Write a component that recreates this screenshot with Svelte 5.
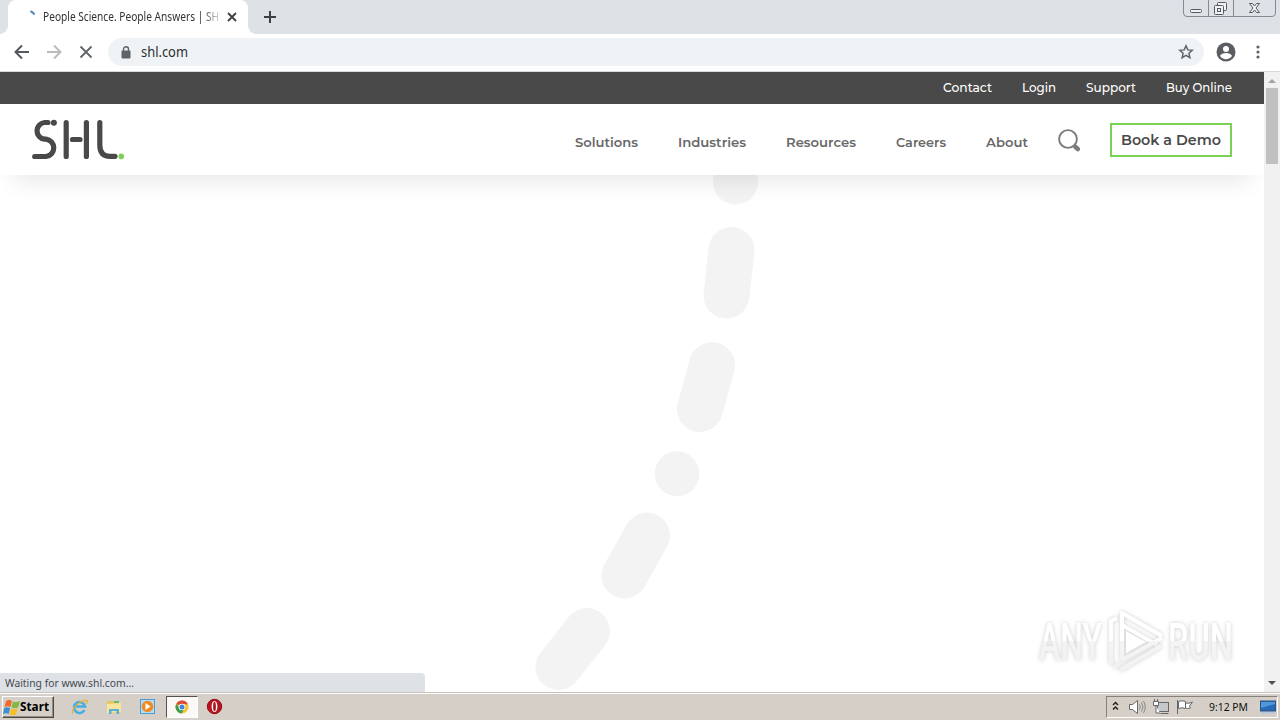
<script>
  const utility = [
    { label: 'Contact', width: 49 },
    { label: 'Login', width: 34 },
    { label: 'Support', width: 50 },
    { label: 'Buy Online', width: 66 }
  ];
  const menu = [
    { label: 'Solutions', width: 63 },
    { label: 'Industries', width: 68 },
    { label: 'Resources', width: 70 },
    { label: 'Careers', width: 50 },
    { label: 'About', width: 42 }
  ];
</script>

{#snippet fitted(label, width, size, weight)}
  <svg class="fitted" {width} height="20" aria-label={label}>
    <text x="0" y="15" font-size={size} font-weight={weight} textLength={width} lengthAdjust="spacingAndGlyphs">{label}</text>
  </svg>
{/snippet}

<div class="screen">
  <div class="tabstrip">
    <div class="tab">
      <svg class="spinner" width="16" height="16" viewBox="0 0 16 16"><path d="M6.500 2.200Q9 3 10.500 5.500" fill="none" stroke="#4a7fb5" stroke-width="2" /></svg>
      <div class="title">{@render fitted('People Science. People Answers | SH', 176, 12, 400)}</div>
      <svg class="close" width="10" height="10" viewBox="0 0 10 10"><path d="M1 1l8 8M9 1L1 9" stroke="#3c4043" stroke-width="1.800" /></svg>
    </div>
    <svg class="plus" width="12" height="12" viewBox="0 0 12 12"><path d="M6 0v12M0 6h12" stroke="#3c4043" stroke-width="2" /></svg>
    <svg class="window-buttons" width="94" height="18" viewBox="0 0 94 18">
      <path d="M.5 0V13Q.5 16.500 4 16.500H89Q92.500 16.500 92.500 13V0M25.500 0V16M50.500 0V16" fill="none" stroke="#858990" />
      <g fill="#f1f2f4" stroke="#555960">
        <rect x="7.500" y="9.500" width="11" height="3" rx="1" />
        <rect x="34.500" y="2.500" width="9" height="8" rx="1" />
        <rect x="31.500" y="5.500" width="9" height="9" rx="1" />
        <rect x="34.500" y="8.500" width="3" height="3" />
        <path d="M66.500 3.500h3l2 2.500 2-2.500h3l-3.500 4.500 3.500 4.500h-3l-2-2.500-2 2.500h-3l3.500-4.500z" />
      </g>
    </svg>
  </div>

  <div class="toolbar">
    <svg class="nav-icons" width="80" height="16" viewBox="0 0 80 16" fill="none" stroke-width="2">
      <path d="M15 8H2M8 1.500L1.500 8 8 14.500" stroke="#55585c" />
      <path d="M33 8h13M40 1.500L46.500 8 40 14.500" stroke="#babcbe" />
      <path d="M66.500 2.500l11 11M77.500 2.500l-11 11" stroke="#606367" stroke-width="1.800" />
    </svg>
    <div class="omnibox">
      <svg width="10" height="13" viewBox="0 0 10 13"><rect x="0.500" y="4.500" width="9" height="8" rx="1" fill="#5f6368" /><path d="M2.500 5V3.200a2.500 2.500 0 0 1 5 0V5" fill="none" stroke="#5f6368" stroke-width="1.400" /></svg>
      <div class="url">{@render fitted('shl.com', 47, 14, 400)}</div>
      <svg class="star" width="16" height="16" viewBox="0 0 16 16"><path d="M8 1.800l1.800 4.100 4.500.4-3.400 3 1 4.400L8 11.400l-3.900 2.300 1-4.400-3.400-3 4.500-.4z" fill="none" stroke="#5f6368" stroke-width="1.500" /></svg>
    </div>
    <svg class="avatar" width="20" height="20" viewBox="0 0 20 20"><circle cx="10" cy="10" r="9.500" fill="#5a5d62" /><circle cx="10" cy="7" r="3" fill="#fff" /><path d="M4 14c1.200-4 10.800-4 12 0a7.200 7.200 0 0 1-12 0z" fill="#fff" /></svg>
    <svg class="dots" width="4" height="14" viewBox="0 0 4 14" fill="#5f6368"><circle cx="2" cy="2" r="1.600" /><circle cx="2" cy="7" r="1.600" /><circle cx="2" cy="12" r="1.600" /></svg>
  </div>

  <div class="viewport">
    <main class="page">
      <svg class="trail" width="1264" height="620" viewBox="0 72 1264 620" fill="none" stroke="#f3f3f3" stroke-linecap="round" stroke-width="46">
        <path d="M735.500 181.500V182" stroke-width="45" />
        <path d="M731.500 250L726.500 295.500M712 365.300L700 409M647 535.500L624.500 575.500M587 631L558.500 667" />
        <path d="M677 473.500V474" stroke-width="44.500" />
      </svg>
      <header>
        <div class="utility">
          {#each utility as item}{@render fitted(item.label, item.width, 13, 500)}{/each}
        </div>
        <div class="main-nav">
          <svg class="logo" width="92" height="42" viewBox="0 0 92 42" fill="none" stroke="#4a4949" stroke-width="5.200" stroke-linecap="round">
            <path d="M16 4.500H12.500a8.400 8.400 0 0 0 0 16.700H14a8.700 8.700 0 0 1 0 17.300H2.700M34.200 4.500V38.500M54.400 4.500V38.500M40.500 21.500H48M67.800 4.500V27Q67.800 38.300 78 38.300H83" />
            <circle cx="21.900" cy="4.700" r="3" fill="#4a4949" stroke="none" />
            <circle cx="89.300" cy="38.400" r="2.800" fill="#79d255" stroke="none" />
          </svg>
          <nav>{#each menu as item}{@render fitted(item.label, item.width, 13, 600)}{/each}</nav>
          <svg class="search" width="24" height="24" viewBox="0 0 24 24"><circle cx="10" cy="10" r="8.900" fill="none" stroke="#7b7b7b" stroke-width="1.900" /><path d="M16.300 16.300l1.700 1.700" stroke="#7b7b7b" stroke-width="2" /><path d="M17.500 18l2.300 2" stroke="#7b7b7b" stroke-width="4.600" stroke-linecap="round" /></svg>
          <div class="demo">{@render fitted('Book a Demo', 100, 15, 600)}</div>
        </div>
      </header>
      <svg class="watermark" width="206" height="72" viewBox="0 0 206 72">
        <defs>
          <linearGradient id="sheen" gradientUnits="userSpaceOnUse" x1="0" y1="0" x2="0" y2="72">
            <stop offset=".47" stop-color="#fff" /><stop offset=".48" stop-color="#f4f4f4" /><stop offset="1" stop-color="#f1f1f1" />
          </linearGradient>
        </defs>
        <g fill="url(#sheen)" font-family="Roboto, sans-serif" font-size="51" font-weight="500">
          <text x="5" y="53" textLength="63" lengthAdjust="spacingAndGlyphs">ANY</text>
          <text x="134" y="53" textLength="65" lengthAdjust="spacingAndGlyphs">RUN</text>
        </g>
        <g fill="none" stroke="url(#sheen)" stroke-width="4" stroke-linejoin="round">
          <path d="M77 57V14L83 11M88 53V6L128 29M88 53L128 31" />
          <path d="M88 18L123 38M80 60L86 57M86 63L127 39" />
        </g>
        <path d="M92 24V46L112 35z" fill="#fff" />
      </svg>
      <div class="status">{@render fitted('Waiting for www.shl.com...', 129, 11.5, 400)}</div>
    </main>
    <div class="scrollbar">
      <svg width="10" height="5" viewBox="0 0 10 5"><path d="M1 5l4-4 4 4z" fill="#a3a3a3" /></svg>
      <div class="thumb"></div>
      <svg class="down" width="10" height="5" viewBox="0 0 10 5"><path d="M1 0l4 4 4-4z" fill="#505050" /></svg>
    </div>
  </div>

  <footer>
    <div class="start">
      <svg width="18" height="17" viewBox="0 0 18 17">
        <path d="M3 2Q6 0 9 2L7.500 8Q4.500 6.500 1.500 8z" fill="#ee6b2c" /><path d="M10 2.500Q13 4 17 2L15 8.500Q12 10 8.500 8.500z" fill="#80b941" />
        <path d="M1.200 9Q4 7.500 7.200 9L5.700 15Q3 13.500 0 15z" fill="#3f8fd2" /><path d="M8.200 9.500Q11 11 14.700 9.500L13 15.500Q10 17 6.700 15.500z" fill="#f7bd25" />
      </svg>
      {@render fitted('Start', 29, 12, 700)}
    </div>
    <div class="launch">
      <svg width="18" height="18" viewBox="0 0 18 18"><path d="M13.500 12A5.500 5.500 0 1 1 14 8.500H4" fill="none" stroke="#45aee2" stroke-width="2.600" /><path d="M2 15.500C-1 12 10 1 16 2.500c1 .5 0 2-1 3" fill="none" stroke="#e5b437" stroke-width="1.300" /></svg>
      <svg width="18" height="18" viewBox="0 0 18 18"><path d="M2 3h6l1 2h6v10H2z" fill="#e8c65c" /><path d="M2 6l14-1v9l-14 1z" fill="#f8e69a" /><path d="M4 16v-5h10v5h-2.500v-3h-5v3z" fill="#58b1da" /><path d="M9 3h5v2H9z" fill="#70b86c" /></svg>
      <svg width="18" height="18" viewBox="0 0 18 18"><rect x="1.500" y="1.500" width="14" height="14" fill="#b5dcf7" stroke="#4c9ed8" /><circle cx="8.500" cy="8.500" r="5.800" fill="#f18b20" /><path d="M6.500 5l5 3.500-5 3.500z" fill="#fff" /></svg>
      <div class="running">
        <svg width="14" height="14" viewBox="0 0 14 14"><circle cx="7" cy="7" r="6.500" fill="#f4c52f" /><path d="M7 7L1.400 3.700A6.500 6.500 0 0 1 12.900 4.200H7z" fill="#df4938" /><path d="M1.400 3.700A6.500 6.500 0 0 0 6.700 13.500L9.500 8.300 7 7 4.500 8.500z" fill="#3c9c56" /><circle cx="7" cy="7" r="3.300" fill="#fff" /><circle cx="7" cy="7" r="2.500" fill="#4285d8" /></svg>
      </div>
      <svg width="18" height="18" viewBox="0 0 18 18"><circle cx="8.500" cy="8.500" r="7.200" fill="#b9141e" stroke="#8b1219" /><ellipse cx="8.500" cy="8.500" rx="2.900" ry="5.500" fill="#fff" /><ellipse cx="8.500" cy="8.500" rx="1.400" ry="4.700" fill="#a81920" /></svg>
    </div>
    <div class="tray">
      <svg width="82" height="18" viewBox="0 0 82 18" fill="none">
        <path d="M1 7l2.500-2.500L6 7M1 11.500L3.500 9 6 11.500" stroke="#222" stroke-width="1.500" />
        <g stroke="#66686a" fill="#fff">
          <path d="M17.500 6.500h3l5-4v13l-5-4h-3z" />
          <path d="M27.500 6.500q1.500 2.500 0 5M29.500 4.500q3 4.500 0 9M31.500 3q3.500 6 0 12" fill="none" stroke="#888" />
          <rect x="45.500" y="4.500" width="11" height="9" fill="#c7c8c9" /><path d="M48.500 15.500h8M41.500 3.500h5v4h-5zM42.500 1v2M45.500 1v2M44 7.500v7.500h4" />
          <path d="M65.500 2v14M66.500 3.500q3.500-1.500 7 0v7q-3.500-1.500-7 0zM73.500 5q3.500 1 7-1l-3 4 1 2q-3 1-5 0" />
        </g>
      </svg>
      <div class="clock">{@render fitted('9:12 PM', 39, 11.5, 400)}</div>
      <svg class="desktop" width="16" height="14" viewBox="0 0 16 14"><rect x=".5" y="1" width="15" height="10" fill="#286bb8" stroke="#275484" /><path d="M1 2h14v2L1 8z" fill="#5098d9" /><path d="M1 13h14" stroke="#b7cadb" stroke-width="2" /></svg>
    </div>
  </footer>
</div>

<style>
  :global(body) { margin: 0; overflow: hidden; }
  .screen { width: 1280px; height: 720px; display: flex; flex-direction: column; background: #fff; overflow: hidden; }
  svg { display: block; flex-shrink: 0; }
  .fitted { overflow: visible; fill: currentColor; }
  .tabstrip { height: 34px; background: #dee1e6; display: flex; padding-left: 8px; box-sizing: border-box; color: #303236; font-family: "Noto Sans", sans-serif; }
  .tab { width: 240px; background: #fff; border-radius: 8px 8px 0 0; display: flex; position: relative; }
  .tab::before, .tab::after { content: ""; position: absolute; bottom: 0; width: 8px; height: 8px; }
  .tab::before { left: -8px; background: radial-gradient(circle at 0 0, transparent 7.5px, #fff 8px); }
  .tab::after { right: -8px; background: radial-gradient(circle at 100% 0, transparent 7.5px, #fff 8px); }
  .spinner { margin: 9px 0 0 16px; }
  .title { width: 176px; height: 24px; margin: 6px 0 0 3px; -webkit-mask-image: linear-gradient(90deg, #000 90%, rgba(0, 0, 0, .2)); mask-image: linear-gradient(90deg, #000 90%, rgba(0, 0, 0, .2)); }
  .close { margin: 12px 0 0 8px; }
  .plus { margin: 11px 0 0 16px; }
  .window-buttons { margin-left: auto; margin-right: 3px; }
  .toolbar { height: 38px; box-sizing: border-box; border-bottom: 1px solid #d8d9db; display: flex; align-items: center; padding: 0 20px 1px 14px; }
  .nav-icons { margin-right: 14px; }
  .omnibox { width: 1096px; height: 28px; border-radius: 14px; background: #f0f3f5; display: flex; align-items: center; padding: 0 10px 0 13px; box-sizing: border-box; color: #2c2e31; font-family: "Noto Sans", sans-serif; }
  .url { margin: -1px 0 0 10px; }
  .star { margin-left: auto; }
  .avatar { margin-left: 12px; }
  .dots { margin-left: auto; }
  .viewport { height: 620px; display: flex; }
  .page { width: 1264px; position: relative; overflow: hidden; }
  .trail { position: absolute; inset: 0; }
  header { position: relative; height: 103px; background: #fff; box-shadow: 0 18px 24px -14px rgba(0, 0, 0, .11); font-family: Montserrat, Inter, sans-serif; }
  .utility { height: 32px; box-sizing: border-box; padding-bottom: 2px; background: #4a4949; color: #fff; display: flex; justify-content: flex-end; align-items: center; gap: 30px; padding-right: 32px; }
  .main-nav { height: 71px; display: flex; padding: 0 32px; color: #686868; }
  .logo { margin-top: 14px; }
  nav { display: flex; gap: 40px; margin: 28px 0 0 451px; }
  .search { margin: 25px 0 0 30px; }
  .demo { width: 122px; height: 34px; box-sizing: border-box; border: 2px solid #79d255; margin: 19px 0 0 auto; padding: 5px 9px; color: #4a4949; }
  .watermark { position: absolute; left: 1034px; top: 535px; filter: drop-shadow(0 0 2px rgba(0, 0, 0, .2)); }
  .status { position: absolute; left: 0; bottom: 0; width: 425px; height: 19px; box-sizing: border-box; background: #dee1e6; border-radius: 0 4px 0 0; padding-left: 5px; color: #45484c; font-family: "Noto Sans", sans-serif; }
  .status .fitted { margin-top: -1px; }
  .scrollbar { width: 16px; background: #f1f1f1; display: flex; flex-direction: column; align-items: center; padding-top: 6px; box-sizing: border-box; }
  .thumb { width: 12px; height: 76px; background: #c1c1c1; margin-top: 5px; }
  .down { margin: auto 0 6px; }
  footer { height: 28px; box-sizing: border-box; background: #d6cfc7; border-top: 1px solid #c5c2be; box-shadow: inset 0 1px #fff; display: flex; font-family: "Noto Sans", sans-serif; color: #111; }
  .start { width: 52px; height: 22px; margin: 3px 0 0 2px; box-sizing: border-box; border: 1px solid #fff; border-right-color: #4d4a46; border-bottom-color: #4d4a46; box-shadow: inset -1px -1px #918b84; display: flex; align-items: center; color: #000; }
  .start .fitted { margin: -2px 0 0 -1px; }
  .launch { display: flex; align-items: center; margin-left: 17px; gap: 16px; padding-top: 1px; }
  .running { width: 32px; height: 22px; box-sizing: border-box; background: #faf9f8; border: 1px solid #fff; border-left-color: #55514d; border-top-color: #55514d; display: flex; align-items: center; justify-content: center; margin: 0 -8px 0 -7px; }
  .tray { margin: 3px 2px 2px auto; width: 172px; box-sizing: border-box; border: 1px solid #fff; border-top-color: #86817b; border-left-color: #86817b; display: flex; align-items: center; padding-left: 5px; }
  .clock { margin: -3px 0 0 15px; }
  .desktop { margin-left: 12px; }
</style>
